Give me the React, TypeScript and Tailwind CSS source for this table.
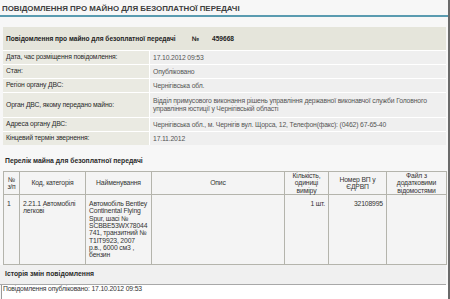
const FONT = "font-['Liberation_Sans',Arial,sans-serif]";

const INFO: { label: string; value: string; tall?: boolean }[] = [
  { label: "Дата, час розміщення повідомлення:", value: "17.10.2012 09:53" },
  { label: "Стан:", value: "Опубліковано" },
  { label: "Регіон органу ДВС:", value: "Чернігівська обл." },
  {
    label: "Орган ДВС, якому передано майно:",
    value:
      "Відділ примусового виконання рішень управління державної виконавчої служби Головного управління юстиції у Чернігівській області",
    tall: true,
  },
  {
    label: "Адреса органу ДВС:",
    value: "Чернігівська обл., м. Чернігів вул. Щорса, 12, Телефон(факс): (0462) 67-65-40",
  },
  { label: "Кінцевий термін звернення:", value: "17.11.2012" },
];

const COLS: { title: string; w: string }[] = [
  { title: "№ з/п", w: "w-[16px]" },
  { title: "Код, категорія", w: "w-[66px]" },
  { title: "Найменування", w: "w-[66px]" },
  { title: "Опис", w: "w-[133px]" },
  { title: "Кількість, одиниці виміру", w: "w-[44px]" },
  { title: "Номер ВП у ЄДРВП", w: "w-[58px]" },
  { title: "Файл з додатковими відомостями", w: "w-[60px]" },
];

export default function App() {
  return (
    <div className={`w-[450px] h-[299px] overflow-hidden bg-[#f7f7f7] border-r-2 border-[#6a6a6a] text-[6.8px] tracking-[-0.15px] text-[#333] ${FONT}`}>
      {/* page title */}
      <div className="h-[15px] pl-[2px] pt-[4px] text-[7.9px] leading-[9px] font-bold uppercase text-[#3d3d3d] tracking-normal">
        Повідомлення про майно для безоплатної передачі
      </div>
      <div className="h-[2px] bg-[#5a9bb0]" />

      <div className="pl-[3px] pr-[2px] pt-[10px]">
        {/* notice header */}
        <div className="h-[23px] bg-[#e5e5db] flex items-center pl-[3px] text-[6.6px] tracking-normal font-bold text-[#222]">
          <span className="w-[186px] shrink-0 whitespace-nowrap">Повідомлення про майно для безоплатної передачі</span>
          <span className="w-[20px] shrink-0">№</span>
          <span>459668</span>
        </div>

        <div className="flex flex-col gap-[1px] pt-[1px] bg-white">
          {INFO.map(row => (
            <div key={row.label} className={`flex gap-[1px] ${row.tall ? "h-[24px]" : "h-[13px]"}`}>
              <div className="w-[146px] shrink-0 bg-[#eaeae2] flex items-center pl-[3px] text-[#2a2a2a]">
                {row.label}
              </div>
              <div className="flex-1 bg-[#efefef] flex items-center pl-[3px] pr-[6px] leading-[8px] text-[#555]">
                {row.value}
              </div>
            </div>
          ))}
        </div>

        {/* property list */}
        <div className="pt-[11px] pb-[5px] pl-[2px] text-[6.8px] tracking-normal font-bold text-[#2a2a2a]">
          Перелік майна для безоплатної передачі
        </div>
        <table className="w-[443px] table-fixed border-collapse bg-[#f4f4f4] leading-[7.3px]">
          <thead>
            <tr className="h-[22px]">
              {COLS.map(c => (
                <th key={c.title} className={`${c.w} border border-[#b4b4ac] font-normal text-center align-middle px-[2px] text-[#333]`}>
                  {c.title}
                </th>
              ))}
            </tr>
          </thead>
          <tbody>
            <tr className="h-[70px] align-top text-[#333]">
              <td className="border border-[#b4b4ac] pt-[5px] pl-[3px]">1</td>
              <td className="border border-[#b4b4ac] pt-[5px] pl-[3px] pr-[2px]">2.21.1 Автомобілі легкові</td>
              <td className="border border-[#b4b4ac] pt-[5px] pl-[3px] pr-[3px]">
                Автомобіль Bentley Continental Flying Spur, шасі № SCBBE53WX78044 741, транзитний № T1IT9923, 2007 р.в., 6000 см3 , бензин
              </td>
              <td className="border border-[#b4b4ac]" />
              <td className="border border-[#b4b4ac] pt-[5px] pr-[3px] text-right">1 шт.</td>
              <td className="border border-[#b4b4ac] pt-[5px] pr-[3px] text-right">32108995</td>
              <td className="border border-[#b4b4ac]" />
            </tr>
          </tbody>
        </table>
      </div>

      {/* history */}
      <div className="h-[20px] bg-[#f0f0f0] border-b border-[#a8a8a8] flex items-center pl-[5px] mr-[2px] text-[6.8px] tracking-normal font-bold text-[#2a2a2a]">
        Історія змін повідомлення
      </div>
      <div className="h-[30px] bg-white border-l border-[#9a9a9a] ml-[1px] pl-[1px] leading-[8px] text-[#333]">
        Повідомлення опубліковано: 17.10.2012 09:53
      </div>
    </div>
  );
}
